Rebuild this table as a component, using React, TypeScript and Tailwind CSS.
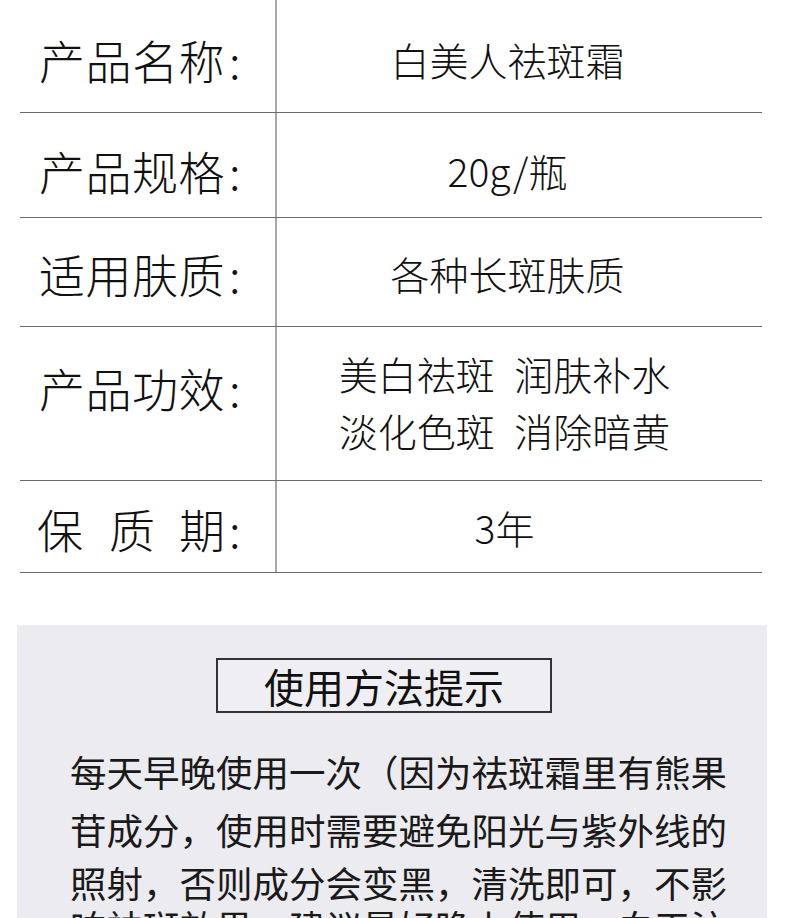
const rows = [
  { label: "产品名称", value: ["白美人祛斑霜"], h: "h-[113px]", shift: "pt-[6px]" },
  { label: "产品规格", value: ["20g/瓶"], h: "h-[105px]", shift: "pt-[10px]" },
  { label: "适用肤质", value: ["各种长斑肤质"], h: "h-[109px]", shift: "pt-[2px]" },
  { label: "产品功效", value: ["美白祛斑\u2002润肤补水", "淡化色斑\u2002消除暗黄"], h: "h-[154px]", shift: "pb-[34px]" },
];

// the picture's copy lines sit at uneven spacing, so each line gets its own top margin
const tips = [
  { text: "每天早晚使用一次（因为祛斑霜里有熊果", mt: "mt-0" },
  { text: "苷成分，使用时需要避免阳光与紫外线的", mt: "mt-[14px]" },
  { text: "照射，否则成分会变黑，清洗即可，不影", mt: "mt-[9px]" },
  { text: "响祛斑效果，建议最好晚上使用，白天注", mt: "mt-0" },
];

function Label({ text }: { text: string }) {
  return (
    <span className="text-[46px] leading-none font-light tracking-[0.5px] text-[#111]">
      {text}
      <span className="ml-[4px]">:</span>
    </span>
  );
}

export default function App() {
  return (
    <div className="w-[790px] h-[918px] overflow-hidden bg-white font-['Noto_Sans_CJK_SC','Noto_Sans',sans-serif]">
      {/* spec table */}
      <div className="ml-[20px] w-[742px]">
        {rows.map((r) => (
          <div key={r.label} className={`flex border-b border-[#6a6a6a] ${r.h}`}>
            <div className={`w-[257px] flex items-center pl-[19px] border-r-2 border-[#a8a8a8] ${r.shift}`}>
              <Label text={r.label} />
            </div>
            <div
              className={`flex-1 flex flex-col items-center justify-center text-[39px] font-light text-[#111] ${
                r.value.length > 1 ? "leading-[57px] pb-[4px] pr-[30px]" : `leading-none pr-[24px] ${r.shift}`
              }`}
            >
              {r.value.map((v) => (
                <div key={v}>{v}</div>
              ))}
            </div>
          </div>
        ))}
        <div className="flex border-b border-[#6a6a6a] h-[92px]">
          <div className="w-[257px] flex items-center pl-[17px] border-r-2 border-[#a8a8a8] pt-[2px]">
            <span className="text-[46px] leading-none font-light text-[#111] flex">
              <span className="mr-[26px]">保</span>
              <span className="mr-[24px]">质</span>
              <span>期</span>
              <span className="ml-[4px]">:</span>
            </span>
          </div>
          <div className="flex-1 flex items-center justify-center pr-[30px] pt-[2px] text-[39px] leading-none font-light text-[#111]">
            3年
          </div>
        </div>
      </div>

      {/* usage tips */}
      <div className="mt-[52px] ml-[17px] w-[750px] h-[400px] bg-[#ebebf0] pt-[33px]">
        <div className="flex justify-center pr-[16px]">
          <div className="w-[336px] h-[55px] border-2 border-[#333] bg-[#efeff3] flex items-center justify-center text-[40px] leading-none text-[#111]">
            使用方法提示
          </div>
        </div>
        <div className="mt-[37px] pl-[53px] text-[36.5px] leading-[44px] text-[#1a1a1a]">
          {tips.map((t) => (
            <div key={t.text} className={`whitespace-nowrap ${t.mt}`}>
              {t.text}
            </div>
          ))}
        </div>
      </div>
    </div>
  );
}
